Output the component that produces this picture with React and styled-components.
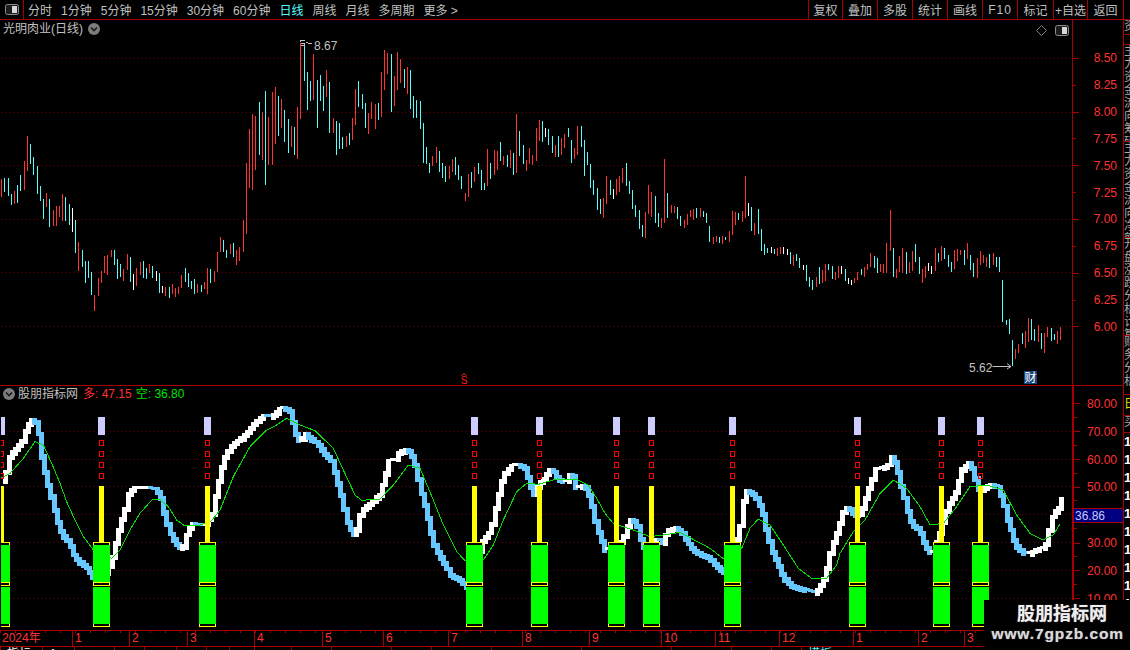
import React from 'react'
import styled, { createGlobalStyle } from 'styled-components'

const LINE = '#a80000'
const RED = '#ff3232'
const CYAN = '#54fcfc'
const GRAY = '#c0c0c0'
const FONT = '"Liberation Sans", "Noto Sans CJK SC", sans-serif'

const GlobalStyle = createGlobalStyle`
  html, body {
    margin: 0;
    background: #000;
  }
  * {
    box-sizing: border-box;
  }
`

const Page = styled.div`
  position: relative;
  width: 1130px;
  height: 650px;
  display: flex;
  flex-direction: column;
  overflow: hidden;
  background: #000;
  color: ${GRAY};
  font-family: ${FONT};
  font-size: 12px;
`

const Toolbar = styled.div`
  flex: none;
  height: 20px;
  display: flex;
  align-items: stretch;
  padding-right: 6px;
  border-bottom: 1px solid ${LINE};
`

const ToggleCell = styled.div`
  width: 24px;
  display: flex;
  align-items: center;
  justify-content: center;
  border-right: 1px solid ${LINE};
`

const Periods = styled.div`
  display: flex;
  align-items: center;
  gap: 9px;
  padding-left: 4px;
  flex: 1;
`

const Period = styled.span`
  color: ${p => (p.$active ? '#54ffff' : GRAY)};
  white-space: nowrap;
`

const ToolButton = styled.div`
  width: ${p => p.$w}px;
  display: flex;
  align-items: center;
  justify-content: center;
  white-space: nowrap;
  border-left: 1px solid ${LINE};
  border-right: ${p => (p.$last ? `1px solid ${LINE}` : 'none')};
  letter-spacing: ${p => (p.$wide ? '1px' : '0')};
`

const Body = styled.div`
  flex: 1;
  min-height: 0;
  display: flex;
`

const Charts = styled.div`
  flex: 1;
  min-width: 0;
  display: flex;
  flex-direction: column;
`

const Pane = styled.div`
  flex: none;
  height: ${p => p.$h}px;
  display: flex;
  border-bottom: ${p => (p.$ruled ? `1px solid ${LINE}` : 'none')};
`

const Plot = styled.div`
  position: relative;
  width: 1072px;
  flex: none;
`

const ChartSvg = styled.svg`
  display: block;
`

const PaneTitle = styled.div`
  position: absolute;
  top: ${p => p.$top}px;
  left: 3px;
  display: flex;
  align-items: center;
  line-height: 14px;
  white-space: nowrap;
`

const Name = styled.span`
  margin: 0 5px 0 ${p => p.$indent || 0}px;
`

const Reading = styled.span`
  color: ${p => p.$color};
  margin-right: 4px;
`

const CornerIcons = styled.div`
  position: absolute;
  top: 5px;
  right: 3px;
  display: flex;
  align-items: center;
  gap: 8px;
`

const Axis = styled.div`
  position: relative;
  flex: 1;
  display: flex;
  flex-direction: column;
  padding-top: ${p => p.$top}px;
  border-left: ${p => p.$edge}px solid ${LINE};
  overflow: hidden;
`

const AxisRow = styled.div`
  position: relative;
  flex: none;
  height: ${p => p.$h}px;
  display: flex;
  align-items: center;
  padding-right: 6px;
  color: ${RED};
  &::after {
    content: '';
    display: ${p => (p.$between ? 'block' : 'none')};
    position: absolute;
    left: 0;
    bottom: 0;
    width: 3px;
    height: 1px;
    background: ${LINE};
  }
`

const TickMark = styled.i`
  width: ${p => (p.$major ? 6 : 3)}px;
  height: 1px;
  background: ${LINE};
`

const AxisLabel = styled.span`
  margin-left: auto;
`

const ValueBox = styled.div`
  position: absolute;
  left: 0;
  right: 0;
  top: 122px;
  height: 15px;
  display: flex;
  align-items: center;
  padding-left: 1px;
  background: #000080;
  border-top: 1px solid ${LINE};
  border-bottom: 1px solid ${LINE};
  color: #c8c8ff;
`

const DateAxis = styled.div`
  flex: none;
  height: 17px;
  display: flex;
  border-top: 1px solid ${LINE};
  border-bottom: 1px solid ${LINE};
  background: repeating-linear-gradient(90deg, ${LINE} 0 1px, transparent 1px 15px) 0 0 / 100% 2px no-repeat;
`

const DateCell = styled.div`
  width: ${p => p.$w}px;
  flex: none;
  padding-left: 2px;
  line-height: 15px;
  color: ${RED};
  border-left: ${p => (p.$first ? 'none' : `1px solid ${LINE}`)};
`

const StatusStrip = styled.div`
  flex: 1;
  display: flex;
  overflow: hidden;
`

const StatusCell = styled.div`
  width: ${p => p.$w}px;
  flex: none;
  overflow: hidden;
  padding-left: 6px;
  line-height: 14px;
  color: ${p => p.$color || '#fff'};
  border-left: 1px solid ${LINE};
`

const SideStrip = styled.div`
  flex: none;
  width: 7px;
  display: flex;
  flex-direction: column;
  border-left: 1px solid ${LINE};
  overflow: hidden;
`

const SideSection = styled.div`
  flex: none;
  height: ${p => p.$h}px;
  overflow: hidden;
  border-bottom: ${p => (p.$open ? 'none' : `1px solid ${LINE}`)};
`

const SideText = styled.div`
  width: 12px;
  line-height: ${p => p.$lh || 13}px;
  font-size: ${p => p.$fs || 12}px;
  font-weight: ${p => (p.$bold ? 700 : 400)};
  color: ${p => p.$color || '#a8a8a8'};
  word-break: break-all;
`

const Watermark = styled.div`
  position: absolute;
  right: 0;
  bottom: 0;
  width: 146px;
  height: 50px;
  display: flex;
  flex-direction: column;
  align-items: flex-end;
  background: #000;
  color: #eee;
  font-weight: 700;
  text-shadow: 0 0 1px #999;
`

const MarkName = styled.div`
  margin: 4px 23px 0 0;
  font-size: 18px;
  line-height: 20px;
`

const MarkUrl = styled.div`
  margin: 1px 6px 0 0;
  font-size: 15.5px;
  line-height: 18px;
  letter-spacing: 0.9px;
  color: #d8d8d8;
`

// every group was read from a crop: left and top of the crop, then x,top,bottom,colour at 3x
const readBars = (x0, y0, text) =>
  text.trim().split(/\s+/).map(t => {
    const [x, a, b, c] = t.split(',')
    return { x: x0 + Math.floor(+x / 3), top: Math.round(y0 + +a / 3), bottom: Math.round(y0 + +b / 3), c }
  })

const readPoints = (x0, y0, text) =>
  text.trim().split(/\s+/).map(t => {
    const [x, y] = t.split(',')
    return [x0 + +x / 3, y0 + +y / 3]
  })

const BARS = [
  ...readBars(0, 130, `4,147,201,r 13,145,186,c 25,145,198,c 34,192,225,c 43,183,222,r 52,165,220,c 61,135,183,c 73,93,180,r
    82,18,123,r 91,42,102,c 100,81,135,c 112,108,192,c 121,168,213,c 130,207,267,c 139,189,231,r 148,207,291,c 160,240,288,r
    169,228,288,r 178,228,261,r 187,192,273,r 196,201,273,c 208,222,285,c 217,234,306,w 226,270,369,c 235,336,423,r 247,360,411,c
    256,393,459,c 265,393,444,c 274,426,495,c 283,495,543,r 295,444,498,r 304,423,459,r 313,378,429,r 322,375,435,r 334,360,381,r
    343,360,405,c 352,387,447,c 361,402,441,c 370,417,453,r 382,372,420,r 391,381,456,c 400,432,480,w 409,414,468,r 421,396,435,r
    430,393,444,c 439,414,447,c 448,402,429,r 457,408,444,c 469,423,453,w 478,429,489,c 487,468,489,w 496,471,498,r 508,471,504,c
    517,462,492,r 526,474,501,r 535,471,492,r 544,435,474,r 556,414,456,c 565,429,471,c 574,453,477,c 583,447,492,c 592,462,489,r
    604,465,486,c 613,456,477,r 622,414,492,r 631,417,459,c 643,423,456,r 652,366,427,r 661,321,366,r 670,330,366,c 679,360,384,c
    691,342,372,r 700,339,381,c 709,360,405,r 718,351,393,r 730,270,366,r 739,99,312,r`),
  ...readBars(240, 30, `28,297,474,r 37,252,480,r 46,258,420,r 58,216,375,c 67,246,390,r 76,183,465,c 85,261,405,r 97,186,405,r
    106,171,342,r 115,198,318,c 124,207,294,r 133,240,336,c 145,267,369,c 154,288,351,r 163,291,375,c 172,231,387,r 181,40,267,r`),
  ...readBars(300, 30, `13,40,153,c 22,126,240,c 31,153,213,c 40,72,210,r 52,150,294,c 61,135,213,c 70,168,243,c 79,120,201,r
    88,156,309,c 100,264,309,r 109,273,375,c 118,279,357,c 127,321,357,c 139,318,351,r 148,309,345,c 157,264,330,r 166,177,285,r
    175,153,231,c 187,192,237,c 196,219,294,c 205,249,312,r 214,216,267,r 226,222,297,r 235,219,270,c 244,126,261,r 253,60,180,r
    262,69,132,r 274,72,246,c 283,138,228,r 292,66,180,r 301,87,159,r 313,117,174,c 322,111,192,r 331,120,237,c 340,198,264,c
    349,210,264,c 361,213,297,c 370,279,399,c 379,351,402,c 388,399,429,c 397,378,408,r 409,351,399,r 418,363,426,c 427,399,444,c
    436,408,456,c 448,408,447,r 457,387,426,r 466,381,435,c 475,405,450,c 484,438,477,c 496,489,513,r 505,432,501,r 514,426,474,c
    523,411,456,r 535,399,432,c 544,420,480,c 553,459,480,c 562,357,468,r 571,399,447,c 583,360,435,r 592,363,420,r 601,336,393,c
    610,378,405,r 622,375,411,c 631,360,414,r 640,369,435,c 649,252,429,r 658,303,378,c 670,345,402,c 679,390,423,r 688,354,402,r
    697,375,405,r 709,294,393,r 718,270,333,r 727,273,336,c 736,294,321,w 745,297,345,c 757,318,369,c 766,345,381,r 775,318,381,c
    784,324,375,r 793,312,354,r 805,294,321,c 814,330,399,c 823,354,387,r 832,288,375,r 844,288,351,c 853,330,438,c 862,366,405,c
    871,402,474,c 880,450,495,c 892,474,540,c`),
  ...readBars(580, 130, `61,207,252,c 70,204,264,r 79,138,222,r 91,150,195,c 100,177,207,w 109,147,195,r 118,138,186,r 127,114,159,r
    139,99,168,c 148,153,192,c 157,180,237,c 166,225,261,c 178,240,297,c 187,285,321,c 196,246,324,r 205,165,252,r 214,186,261,r
    226,198,279,c 235,249,291,c 244,264,294,r 253,87,279,r 262,189,264,c 274,225,249,r 283,228,249,r 292,231,267,c 301,258,288,c
    313,270,294,r 322,252,285,r 331,240,261,r 340,237,270,r 349,234,264,c 361,234,261,r 370,243,261,c 379,249,279,c 388,288,336,c
    400,321,342,r 409,318,336,r 418,321,339,c 427,318,342,r 436,321,330,c 448,303,336,r 457,243,315,r 466,246,285,r 475,249,270,c
    487,243,276,r 496,138,264,r 505,219,258,w 514,231,303,c 523,279,315,r 535,237,312,c 544,297,363,c 553,342,375,c 562,354,369,c
    574,351,369,w 583,357,372,c 592,354,378,r 601,351,372,r 610,351,372,w 622,357,375,w 631,366,402,c 640,375,408,r 649,372,393,c
    658,384,414,c 670,405,420,w 679,405,453,c 688,441,471,c 697,450,480,c 709,441,471,r 718,411,462,c 727,420,459,r 736,402,453,r
    745,402,420,c 757,408,447,c 766,426,450,r 775,408,444,r 784,408,432,w 796,417,453,c 805,444,462,w 814,450,465,w 823,444,459,r
    832,426,450,r`),
  ...readBars(860, 190, `4,237,255,c 13,231,261,r 22,222,240,r 31,189,231,r 43,198,234,c 52,204,249,c 61,222,246,r 70,222,249,r
    79,159,249,r 91,60,183,r 100,174,261,c 109,237,264,r 118,198,246,r 127,174,249,r 139,186,252,c 148,216,249,r 157,183,243,r
    166,162,216,c 178,201,252,c 187,237,279,r 196,228,264,r 205,219,243,w 214,228,252,w 226,174,243,r 235,189,216,c 244,168,213,r
    253,174,207,c 265,195,231,c 274,216,246,c 283,180,237,r 292,177,213,r 301,180,195,r 313,180,225,c 322,159,207,r 331,195,240,c
    340,219,261,c 352,204,264,r 361,183,225,r 370,195,219,r 379,201,231,r 388,192,234,c 400,189,225,r 409,201,231,c 418,201,246,c
    427,270,396,c 439,390,405,c 448,387,432,c 457,450,528,c 466,477,507,r 475,462,489,r 487,429,462,c 496,423,474,r 505,384,456,r
    514,387,450,c 523,417,453,c 535,405,456,r 544,429,477,c 553,429,489,r 562,411,441,r 574,414,453,c 583,432,450,c 592,423,462,r
    601,411,450,r`),
]

const BAR_COLORS = { r: RED, c: CYAN, w: '#ffffff' }

const FAST_LINE = [
  ...readPoints(0, 380, `5,300 15,260 25,225 40,205 60,180 72,150 85,120 95,115 110,150 122,240 135,300 148,350 160,390 172,440
    185,465 205,490 215,520 235,545 255,560 270,580 280,600 310,580 335,525 345,470 358,420 370,380 382,335 395,322 420,322 440,322
    460,325 475,340 485,390 495,430 510,465 525,490 538,505 548,485 558,450 572,430 590,432 610,435 632,395 645,330 655,280 665,235
    680,205 700,185 720,170 740,150 755,130 770,115 790,102 800,110 820,100 835,82`),
  ...readPoints(280, 395, `5,35 25,45 35,85 45,125 55,135 70,112 90,130 110,145 130,175 148,195 160,230 170,270 180,310 188,350
    200,385 215,418 228,395 235,350 250,335 270,318 295,295 310,240 322,190 340,195 352,170 370,160 385,165 400,210 410,260 425,310
    435,350 445,400 455,445 470,470 490,510 510,540 530,548 555,572 585,500 600,438 625,405 640,345 655,275 665,235 690,210 710,205
    730,215 745,265 757,298 772,265 790,245 800,222 815,225 830,250 850,258 868,232`),
  ...readPoints(560, 395, `35,245 45,285 55,265 75,275 90,330 100,380 115,420 130,465 155,450 180,435 195,395 210,365 225,390 240,440
    250,465 270,440 290,430 305,440 315,405 345,395 365,415 385,450 405,470 440,485 460,505 490,530 510,470 530,415 545,320 555,285
    570,290 585,310 600,340 612,400 625,450 645,495 665,545 690,570 720,580 755,590 770,580 790,540 805,465`),
  ...readPoints(830, 380, `0,500 20,440 35,385 50,380 70,405 90,390 110,325 130,265 155,260 170,250 182,225 195,260 210,330 225,380
    240,430 265,450 280,495 300,520 320,470 345,380 370,340 390,265 412,245 425,270 435,325 450,325 475,312 500,320 515,370 535,440
    550,490 570,515 590,518 610,508 640,500 650,450 665,400 685,375 692,345`),
]

const SLOW_LINE = [
  ...readPoints(0, 380, `0,295 30,280 70,235 105,185 130,195 155,250 180,310 200,365 225,420 250,470 280,510 335,535 360,510 390,450
    420,400 455,360 480,358 505,380 530,420 555,438 600,435 635,422 660,390 700,290 750,200 800,150 830,135 860,115`),
  ...readPoints(280, 395, `60,90 105,107 160,160 190,225 225,300 245,316 300,312 340,270 385,210 420,220 460,315 490,390 530,470
    555,497 610,495 640,450 670,375 710,290 740,265 775,268 830,252`),
  ...readPoints(560, 395, `50,253 85,270 110,310 135,355 160,385 220,405 270,425 310,420 360,412 450,460 495,495 545,460 570,400
    595,372 630,390 670,450 715,520 755,550 800,550 830,510`),
  ...readPoints(830, 380, `30,520 70,455 105,420 150,340 190,300 230,325 270,380 300,435 340,430 380,380 420,320 470,315 520,330
    560,405 600,460 640,480 670,465 690,432`),
]

const yOnLine = (points, x) => {
  if (x <= points[0][0]) return points[0][1]
  for (let i = 1; i < points.length; i++) {
    if (x <= points[i][0]) {
      const [x1, y1] = points[i - 1]
      const [x2, y2] = points[i]
      return y1 + ((y2 - y1) * (x - x1)) / (x2 - x1)
    }
  }
  return points[points.length - 1][1]
}

const stairX = BARS.map(b => b.x).filter(x => x >= 1 && x <= 1060)
const STAIRS = stairX.slice(1).map((x, i) => {
  const before = yOnLine(FAST_LINE, stairX[i])
  const now = yOnLine(FAST_LINE, x)
  const rise = Math.abs(now - before)
  return {
    x: x - 1,
    top: Math.round(Math.min(before, now)) - 1,
    height: rise < 1 ? 3 : Math.round(rise) + 5,
    up: now <= before,
  }
})

const SIGNALS = [1.5, 101.5, 207.5, 474.5, 539.5, 616.5, 651.5, 732.5, 857.5, 941.5, 980.5]

const SignalColumn = ({ center }) => {
  const left = center - 8.5
  return (
    <g shapeRendering="crispEdges">
      <rect x={center - 3.5} y={417} width={7} height={18} fill="#ccccff" />
      {[440, 451, 462, 473].map(y => (
        <rect key={y} x={center - 2} y={y + 0.5} width={4} height={5} fill="none" stroke="#ff0000" />
      ))}
      <rect x={center - 2.5} y={486} width={5} height={56} fill="#ffff00" />
      <rect x={left} y={542} width={17} height={85} fill="#000" />
      <rect x={left} y={545} width={17} height={37} fill="#00ff00" />
      <rect x={left} y={587} width={17} height={37} fill="#00ff00" />
      <rect x={left} y={542} width={17} height={1} fill="#ffff00" />
      <rect x={left} y={582} width={17} height={1} fill="#ffff00" />
      <rect x={left} y={585} width={17} height={1} fill="#ffff00" />
      <rect x={left} y={626} width={17} height={1} fill="#ffff00" />
      <rect x={left} y={542} width={1} height={3} fill="#ffff00" />
      <rect x={left + 16} y={542} width={1} height={3} fill="#ffff00" />
      <rect x={left} y={582} width={1} height={4} fill="#ffff00" />
      <rect x={left + 16} y={582} width={1} height={4} fill="#ffff00" />
      <rect x={left} y={624} width={1} height={3} fill="#ffff00" />
      <rect x={left + 16} y={624} width={1} height={3} fill="#ffff00" />
    </g>
  )
}

const GridLines = ({ rows }) =>
  rows.map(y => (
    <line key={y} x1={2} x2={1072} y1={y + 0.5} y2={y + 0.5} stroke="#700000" strokeDasharray="1 3" />
  ))

const PanelIcon = () => (
  <svg width="14" height="11" viewBox="0 0 14 11">
    <rect x="0.5" y="0.5" width="13" height="10" rx="2" fill="#1c1c1c" stroke="#8c8c8c" />
    <rect x="7" y="2" width="5" height="7" fill="#d8d8d8" />
  </svg>
)

const DownBadge = () => (
  <svg width="12" height="12" viewBox="0 0 12 12">
    <circle cx="6" cy="6" r="6" fill="#7c7c7c" />
    <path d="M3 4.5 L6 7.5 L9 4.5" fill="none" stroke="#1a1a1a" strokeWidth="1.6" />
  </svg>
)

const Diamond = () => (
  <svg width="11" height="11" viewBox="0 0 11 11">
    <path d="M5.5 0.5 L10.5 5.5 L5.5 10.5 L0.5 5.5 Z" fill="none" stroke="#808080" />
  </svg>
)

const PriceChart = () => (
  <ChartSvg width="1072" height="365" viewBox="0 20 1072 365">
    <GridLines rows={[58, 112, 165, 219, 272, 326]} />
    <g shapeRendering="crispEdges">
      {BARS.map(b => (
        <rect key={b.x} x={b.x} y={b.top} width={1} height={b.bottom - b.top} fill={BAR_COLORS[b.c]} />
      ))}
    </g>
    <path d="M300 42 v-2 h5 M301 43 h3 v2 h-3 M306 42 l2 1 h4" fill="none" stroke="#c0c0c0" shapeRendering="crispEdges" />
    <text x="314" y="50" fill={GRAY} fontSize="12">8.67</text>
    <text x="969" y="372" fill={GRAY} fontSize="12">5.62</text>
    <path d="M992.5 366.5 H1011 M1007 363.5 L1011 366.5 L1007 369" fill="none" stroke="#c0c0c0" />
    <path d="M461.5 375.5 L464 373.5 L466.5 375.5" fill="none" stroke="#ff2020" />
    <text x="464" y="384" fill="#ff2020" fontSize="10" textAnchor="middle">S</text>
    <rect x="1024" y="371" width="13" height="13" fill="#17467a" />
    <text x="1024.5" y="382" fill="#fff" fontSize="12">财</text>
  </ChartSvg>
)

const IndicatorChart = () => (
  <ChartSvg width="1072" height="244" viewBox="0 386 1072 244">
    <GridLines rows={[431, 459, 486, 514, 542, 570, 598]} />
    <g shapeRendering="crispEdges">
      {STAIRS.map(s => (
        <rect key={s.x} x={s.x} y={s.top} width={5} height={s.height} fill={s.up ? '#ffffff' : '#66c8ff'} />
      ))}
    </g>
    <polyline
      points={SLOW_LINE.map(p => p.join(',')).join(' ')}
      fill="none"
      stroke="#00e000"
      shapeRendering="crispEdges"
    />
    {SIGNALS.map(c => (
      <SignalColumn key={c} center={c} />
    ))}
    <rect x="0" y="386" width="1" height="244" fill="#000" />
  </ChartSvg>
)

const PERIODS = ['分时', '1分钟', '5分钟', '15分钟', '30分钟', '60分钟', '日线', '周线', '月线', '多周期', '更多 >']
const TOOLS = [
  ['复权', 34], ['叠加', 35], ['多股', 35], ['统计', 35], ['画线', 35], ['F10', 35], ['标记', 36], ['+自选', 34], ['返回', 37],
]
const PRICES = ['8.50', '8.25', '8.00', '7.75', '7.50', '7.25', '7.00', '6.75', '6.50', '6.25', '6.00']
// the 40 row has no label, the value box sits on it
const LEVELS = ['80.00', '70.00', '60.00', '50.00', '', '30.00', '20.00', '10.00']
const MONTHS = [
  ['2024年', 72], ['1', 57], ['2', 58], ['3', 67], ['4', 68], ['5', 61], ['6', 65], ['7', 74], ['8', 67],
  ['9', 72], ['10', 54], ['11', 64], ['12', 74], ['1', 65], ['2', 46], ['3', 108],
]
const STATUS = [
  ['指标', 42, '#fff'], ['A', 32], ['', 40], ['', 30], ['', 32], ['', 30], ['', 23], ['', 25], ['', 37],
  ['', 40], ['', 60], ['', 40], ['', 60], ['', 90], ['', 90], ['', 60], ['', 40], ['', 30], ['模板', 40, CYAN],
]
const SIDE = [
  [15, '资'], [10, ''], [97, '主力资金流向筹码分布'], [96, '主力资金流向净额排'], [98, '开盘涨跌分析计算'], [59, '财务分析'],
]

export default function App() {
  return (
    <Page>
      <GlobalStyle />
      <Toolbar>
        <ToggleCell>
          <PanelIcon />
        </ToggleCell>
        <Periods>
          {PERIODS.map(p => (
            <Period key={p} $active={p === '日线'}>{p}</Period>
          ))}
        </Periods>
        {TOOLS.map(([name, w], i) => (
          <ToolButton key={name} $w={w} $wide={name === 'F10'} $last={i === TOOLS.length - 1}>{name}</ToolButton>
        ))}
      </Toolbar>
      <Body>
        <Charts>
          <Pane $h={366} $ruled>
            <Plot>
              <PriceChart />
              <PaneTitle $top={2}>
                <Name>光明肉业(日线)</Name>
                <DownBadge />
              </PaneTitle>
              <CornerIcons>
                <Diamond />
                <PanelIcon />
              </CornerIcons>
            </Plot>
            <Axis $top={25} $edge={1}>
              {PRICES.map((p, i) => (
                <AxisRow key={p} $h={26.85}>
                  <TickMark $major={i % 2 === 0} />
                  <AxisLabel>{p}</AxisLabel>
                </AxisRow>
              ))}
            </Axis>
          </Pane>
          <Pane $h={244}>
            <Plot>
              <IndicatorChart />
              <PaneTitle $top={1}>
                <DownBadge />
                <Name $indent={3}>股朋指标网</Name>
                <Reading $color="#ff3232">多: 47.15</Reading>
                <Reading $color="#00e000">空: 36.80</Reading>
              </PaneTitle>
            </Plot>
            <Axis $top={4} $edge={2}>
              {LEVELS.map((l, i) => (
                <AxisRow key={i} $h={27.85} $between>
                  <TickMark $major />
                  <AxisLabel>{l}</AxisLabel>
                </AxisRow>
              ))}
              <ValueBox>36.86</ValueBox>
            </Axis>
          </Pane>
          <DateAxis>
            {MONTHS.map(([m, w], i) => (
              <DateCell key={i} $w={w} $first={i === 0}>{m}</DateCell>
            ))}
          </DateAxis>
          <StatusStrip>
            {STATUS.map(([t, w, color], i) => (
              <StatusCell key={i} $w={w} $color={color}>{t}</StatusCell>
            ))}
          </StatusStrip>
        </Charts>
        <SideStrip>
          {SIDE.map(([h, text], i) => (
            <SideSection key={i} $h={h}>
              <SideText>{text}</SideText>
            </SideSection>
          ))}
          <SideSection $h={21}>
            <SideText $color="#e8e000" $lh={18}>日</SideText>
          </SideSection>
          <SideSection $h={17}>
            <SideText>买</SideText>
          </SideSection>
          <SideSection $h={180} $open>
            <SideText $color="#fff" $bold $fs={13} $lh={18}>11111111111</SideText>
          </SideSection>
        </SideStrip>
      </Body>
      <Watermark>
        <MarkName>股朋指标网</MarkName>
        <MarkUrl>www.7gpzb.com</MarkUrl>
      </Watermark>
    </Page>
  )
}
